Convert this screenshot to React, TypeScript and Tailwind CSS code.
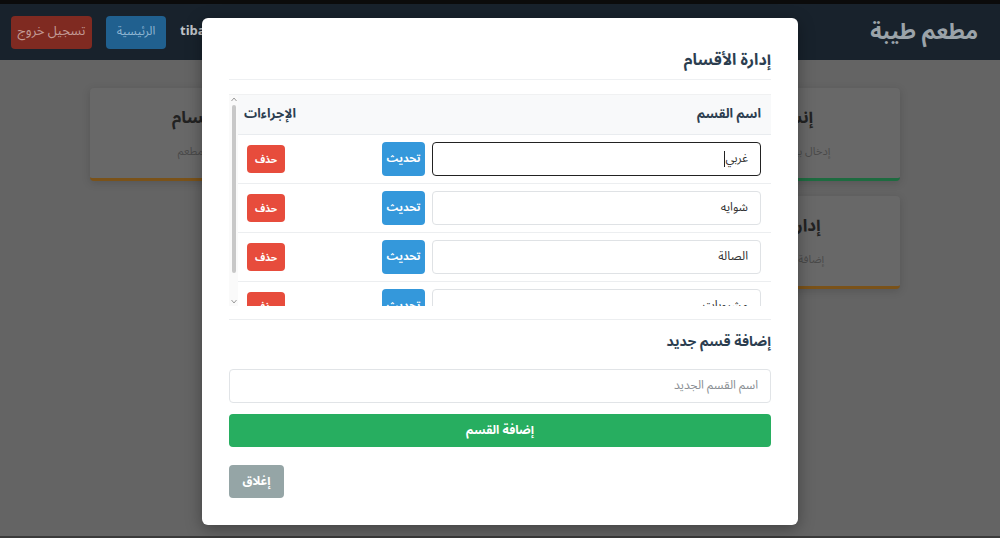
import React from "react";

const font = "font-['Noto_Sans_Arabic','DejaVu_Sans',sans-serif]";

const sections = ["غربي", "شوايه", "الصالة", "مشروبات"];

function BgCard({ title, sub, accent }: { title: string; sub: string; accent: string }) {
  return (
    <div className={`flex h-[93px] flex-col items-center justify-center gap-3 rounded bg-[#686868] shadow-[0_2px_8px_rgba(0,0,0,0.15)] border-b-[3px] ${accent}`}>
      <div className="text-[17px] font-bold text-[#222]">{title}</div>
      <div className="text-[11px] text-[#4a4a4a]">{sub}</div>
    </div>
  );
}

export default function App() {
  return (
    <div dir="rtl" className={`relative h-[538px] w-[1000px] overflow-hidden bg-[#646464] ${font}`}>
      <div className="h-[4px] bg-[#0b0b0b]" />
      <header className="flex h-[56px] items-center justify-between bg-[#18222c] pl-[11px] pr-[22px]">
        <div className="text-[22px] font-bold text-[#9ba3a9]">مطعم طيبة</div>
        <div className="flex items-center gap-[14px]">
          <span className="text-[13px] font-bold text-[#c0c4c8]">tiba</span>
          <button className="h-[33px] w-[60px] rounded bg-[#20608f] text-[12px] text-[#8fb5d2]">الرئيسية</button>
          <button className="h-[33px] w-[81px] rounded bg-[#7f2a21] text-[13px] text-[#c39a95]">تسجيل خروج</button>
        </div>
      </header>

      <main className="grid grid-cols-3 gap-x-[20px] gap-y-[15px] pl-[90px] pr-[100px] pt-[28px]">
        <BgCard title="إنشاء طلب" sub="إدخال بيانات الطلب الجديد" accent="border-[#1e6b40]" />
        <BgCard title="الطلبات" sub="عرض ومتابعة الطلبات" accent="border-[#1f5b84]" />
        <BgCard title="إدارة الأقسام" sub="إدارة أقسام المطعم" accent="border-[#7a5219]" />
        <BgCard title="إدارة الأصناف" sub="إضافة أو تعديل الأصناف" accent="border-[#7a5219]" />
        <BgCard title="التقارير" sub="عرض تقارير المبيعات" accent="border-[#5b3a6e]" />
        <div />
      </main>

      <div className="absolute bottom-0 left-0 h-[2px] w-full bg-[#3a3a3a]" />

      <div className="absolute left-[202px] top-[18px] w-[596px] rounded-md bg-white px-[27px] pb-[27px] pt-[30px] shadow-[0_4px_16px_rgba(0,0,0,0.35)]">
        <div className="border-b border-[#eef0f2] pb-[7px]">
          <h2 className="h-[24px] text-[16px] font-bold leading-[24px] text-[#2c3e50]">إدارة الأقسام</h2>
        </div>

        <div className="mt-[14px] flex h-[212px] border-t border-[#f0f1f2]">
          <div className="h-full flex-1 overflow-hidden">
            <div className="flex h-[40px] items-center justify-between border-b border-[#e9ecef] bg-[#f8f9fa] text-[13px] font-bold text-[#2c3e50]">
              <div className="pr-[10px]">اسم القسم</div>
              <div className="w-[70px] pr-[12px]">الإجراءات</div>
            </div>
            {sections.map((s, i) => (
              <div key={s} className="flex h-[49px] shrink-0 items-center justify-between border-b border-[#eceef0]">
                <div className="flex items-center gap-[7px] pr-[10px]">
                  <div
                    className={`flex h-[34px] w-[329px] items-center rounded px-[12px] text-[12px] text-[#333] ${
                      i === 0 ? "border border-[#222]" : "border border-[#dfe2e5]"
                    }`}
                  >
                    {s}
                    {i === 0 && <span className="mr-[1px] h-[16px] w-px bg-[#222]" />}
                  </div>
                  <button className="h-[34px] w-[43px] rounded bg-[#3498db] text-[11px] font-bold text-white">تحديث</button>
                </div>
                <div className="flex w-[70px] justify-end pl-[9px]">
                  <button className="h-[28px] w-[38px] rounded bg-[#e74c3c] text-[10px] font-bold text-white">حذف</button>
                </div>
              </div>
            ))}
          </div>
          <div className="flex h-full w-[9px] flex-col items-center justify-between bg-[#fafafa] py-[2px]">
            <svg width="6" height="5" viewBox="0 0 6 5">
              <path d="M0.5 4 L3 1 L5.5 4" fill="none" stroke="#9a9a9a" strokeWidth="1" />
            </svg>
            <div className="mb-auto mt-[3px] h-[168px] w-[4px] rounded-full bg-[#c8c8c8]" />
            <svg width="6" height="5" viewBox="0 0 6 5">
              <path d="M0.5 1 L3 4 L5.5 1" fill="none" stroke="#9a9a9a" strokeWidth="1" />
            </svg>
          </div>
        </div>

        <div className="mt-[13px] border-t border-[#eceef0]" />
        <h3 className="mt-[12px] h-[20px] text-[14px] font-bold leading-[20px] text-[#2c3e50]">إضافة قسم جديد</h3>
        <div className="mt-[17px] flex h-[34px] items-center rounded border border-[#e1e4e7] px-[12px] text-[12px] text-[#8a8f94]">
          اسم القسم الجديد
        </div>
        <button className="mt-[11px] h-[33px] w-full rounded bg-[#27ae60] text-[12px] font-bold text-white">إضافة القسم</button>
        <div className="mt-[18px] flex justify-end">
          <button className="h-[33px] w-[55px] rounded bg-[#95a5a6] text-[12px] font-bold text-white">إغلاق</button>
        </div>
      </div>
    </div>
  );
}
